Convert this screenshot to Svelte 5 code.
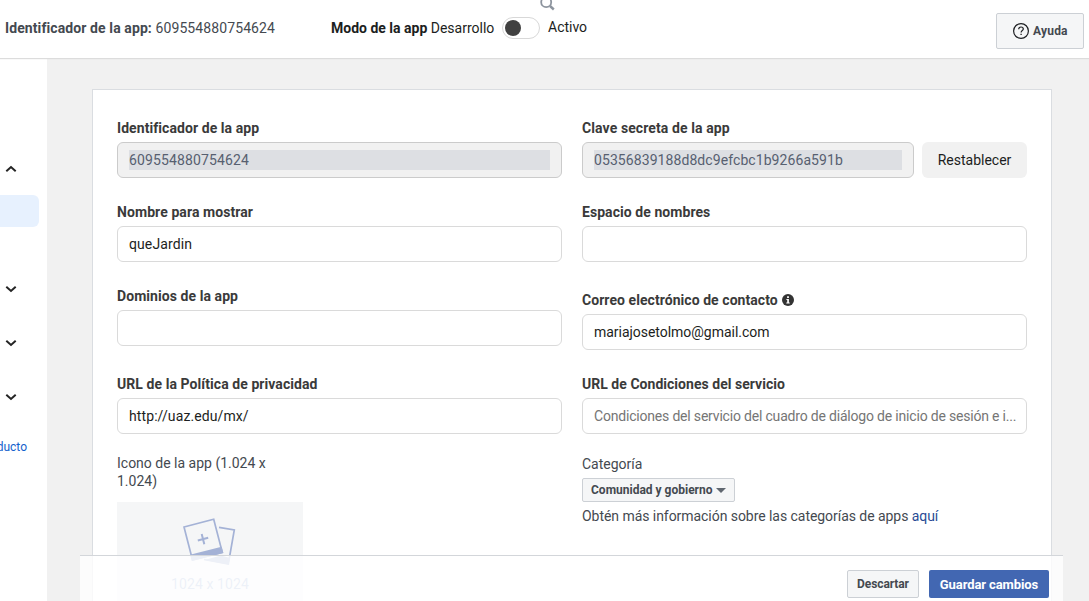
<script>
  const left = [
    { label: 'Identificador de la app', value: '609554880754624', locked: true, ls: 0.07, vs: 0.14 },
    { label: 'Nombre para mostrar', value: 'queJardin', ls: 0.08, vs: 0.1 },
    { label: 'Dominios de la app', value: '', ls: 0.07, vs: 0 },
    { label: 'URL de la Política de privacidad', value: 'http://uaz.edu/mx/', roomy: true, ls: 0.07, vs: 0.1 }
  ];
  const right = [
    { label: 'Clave secreta de la app', value: '05356839188d8dc9efcbc1b9266a591b', locked: true, reset: true, ls: 0.1, vs: 0.08 },
    { label: 'Espacio de nombres', value: '', ls: 0.06, vs: 0 },
    { label: 'Correo electrónico de contacto', value: 'mariajosetolmo@gmail.com', info: true, roomy: true, ls: 0.06, vs: -0.03 },
    { label: 'URL de Condiciones del servicio', value: '', placeholder: 'Condiciones del servicio del cuadro de diálogo de inicio de sesión e i...', ls: 0.03, vs: -0.19 }
  ];
</script>

{#snippet field(f)}
  <div class="field" class:roomy={f.roomy}>
    <div class="label">
      <span style="letter-spacing: {f.ls}px">{f.label}</span>
      {#if f.info}
        <svg width="12" height="12" viewBox="0 0 12 12"><circle cx="6" cy="6" r="6" fill="#333" /><path d="M4.4 5h2.5v3.5h.8v1H4.3v-1h.9V6h-.8zM5.1 2.3h1.8v1.6H5.1z" fill="#fff" /></svg>
      {/if}
    </div>
    <div class="line">
      <div class="input" class:locked={f.locked}>
        <span class="value" class:placeholder={f.placeholder} style="letter-spacing: {f.vs}px">{f.value || f.placeholder || ''}</span>
      </div>
      {#if f.reset}<button class="reset">Restablecer</button>{/if}
    </div>
  </div>
{/snippet}

<div class="page">
  <header>
    <svg class="search" width="16" height="16" viewBox="0 0 16 16" fill="none" stroke="#8d949e"><circle cx="6.2" cy="6.2" r="5" stroke-width="1.8" /><path d="M10 10l3.8 3.5" stroke-width="2.4" /></svg>
    <div class="appid"><b>Identificador de la app:</b> <span>609554880754624</span></div>
    <div class="mode"><b>Modo de la app</b> <span>Desarrollo</span></div>
    <div class="toggle"><i></i></div>
    <div class="active">Activo</div>
    <button class="help">
      <svg width="16" height="16" viewBox="0 0 16 16" fill="none" stroke="#1c1e21"><circle cx="8" cy="8" r="7.4" stroke-width="1.2" /><path d="M5.7 6.3C5.7 4.8 6.6 4 8 4s2.3.8 2.3 2c0 1.6-2.2 1.6-2.2 3.5" stroke-width="1.2" /><path d="M8.1 10.8v1.3" stroke-width="1.3" /></svg>
      <span>Ayuda</span>
    </button>
  </header>

  <div class="body">
    <nav>
      <div class="nav-item"><svg class="chev" width="12" height="8" viewBox="0 0 12 8"><path d="M1.3 6.2L6 2l4.7 4.2" /></svg></div>
      <div class="selected"></div>
      {#each [1, 2, 3] as n (n)}
        <div class="nav-item group"><svg class="chev" width="12" height="8" viewBox="0 0 12 8"><path d="M1.3 1.8L6 6l4.7-4.2" /></svg></div>
      {/each}
      <div class="product">ducto</div>
    </nav>

    <main>
      <section class="card">
        <div class="col">
          {#each left as f (f.label)}{@render field(f)}{/each}
          <div class="icon-label">Icono de la app (1.024 x<br />1.024)</div>
          <div class="upload">
            <svg width="54" height="50" viewBox="0 0 54 50" fill="none" stroke="#a4b2d6" stroke-width="1.7">
              <path d="M36 9.3L51.3 12 45.3 46 21 41.5" />
              <path d="M21.5 42L38 37.5 47 40 45.5 46.5z" fill="#a4b2d6" stroke="none" />
              <path d="M1 9L30.7 1.2 39.3 34.4 9.5 42z" fill="#f5f6f7" />
              <path d="M8.2 37.4L38 29.7 39.3 34.4 9.5 42z" fill="#a4b2d6" />
              <path d="M14.8 22.5l10.4-2.7M18.7 16l2.6 10.2" stroke-width="2" />
            </svg>
            <span>1024 x 1024</span>
          </div>
        </div>
        <div class="col">
          {#each right as f (f.label)}{@render field(f)}{/each}
          <div class="cat-label">Categoría</div>
          <button class="select"><span>Comunidad y gobierno</span><i></i></button>
          <div class="more">Obtén más información sobre las categorías de apps <a href="#top">aquí</a></div>
        </div>
      </section>
    </main>
  </div>

  <footer>
    <button class="discard">Descartar</button>
    <button class="save">Guardar cambios</button>
  </footer>
</div>

<style>
  :global(body) { margin: 0; }
  * { box-sizing: border-box; }
  .page {
    position: relative; width: 1089px; height: 601px; overflow: hidden;
    display: flex; flex-direction: column; background: #f1f1f1;
    font: 14px/20px Roboto, sans-serif; color: #1c1e21; white-space: nowrap;
  }
  button { font-family: inherit; margin: 0; padding: 0; white-space: nowrap; }
  svg { display: block; flex: none; }
  header {
    position: relative; z-index: 1; height: 58px; flex: none; display: flex; align-items: flex-start;
    padding: 0 5px; background: #fff; box-shadow: 0 1px 1px #dcdcdc;
  }
  .search { position: absolute; left: 540px; top: -4px; }
  .appid { width: 326px; padding-top: 18px; color: #444950; letter-spacing: 0.1px; }
  .mode { width: 171px; padding-top: 18px; }
  .toggle { width: 38px; height: 22px; margin-top: 17px; padding: 2px; border: 1px solid #d8d8d8; border-radius: 11px; }
  .toggle i { display: block; width: 16px; height: 16px; border-radius: 50%; background: #404040; }
  .active { margin: 17px 0 0 8px; }
  .help {
    display: flex; align-items: center; gap: 4px; width: 88px; height: 36px; margin: 13px 0 0 auto; padding-left: 16px;
    background: #f5f6f7; border: 1px solid #ccd0d5; border-radius: 2px; font-size: 12px; font-weight: 700; color: #444950; letter-spacing: 0.2px;
  }
  .body { display: flex; flex: 1; min-height: 0; }
  nav { width: 47px; background: #fff; overflow: hidden; padding-top: 107px; }
  .nav-item { height: 8px; padding-left: 5px; }
  .chev { fill: none; stroke: #242424; stroke-width: 2; }
  .selected { height: 32px; width: 39px; margin: 22px 0 58px; background: #e7f1fe; border-radius: 0 6px 6px 0; }
  .group { margin-bottom: 46px; }
  .product { width: 27px; display: flex; justify-content: flex-end; margin-top: -10px; font-size: 12px; color: #1461cc; }
  main { flex: 1; padding: 31px 0 0 45px; }
  .card { display: flex; gap: 20px; width: 960px; height: 560px; padding: 28px 24px 0; border: 1px solid #dadde1; background: #fff; }
  .col { width: 445px; flex: none; }
  .field { margin-bottom: 24px; }
  .field.roomy { margin-top: 28px; }
  .label { display: flex; align-items: center; gap: 4px; height: 20px; margin-bottom: 4px; font-weight: 700; color: #3a3a3a; }
  .line { display: flex; gap: 8px; }
  .input { flex: 1; min-width: 0; height: 36px; padding: 7px 11px; border: 1px solid #dadada; border-radius: 6px; background: #fff; }
  .value { display: block; height: 20px; }
  .placeholder { color: #757575; }
  .locked { background: #f1f1f1; border-color: #cbcbcb; }
  .locked .value { background: #dddfe3; color: #576070; }
  .reset { width: 105px; height: 36px; border: 0; border-radius: 6px; background: #f1f1f1; color: #1c1e21; font-size: 14px; }
  .icon-label { margin-top: -4px; line-height: 18px; color: #444950; }
  .upload { width: 186px; height: 150px; margin-top: 12px; padding-top: 16px; background: #f5f6f7; display: flex; flex-direction: column; align-items: center; color: #a4b8dc; }
  .upload span { margin-top: 6px; letter-spacing: 0.1px; }
  .cat-label { margin-top: -4px; color: #444950; }
  .select {
    display: flex; align-items: center; justify-content: space-between; width: 153px; height: 24px; margin: 4px 0; padding: 0 8px;
    background: #f5f6f7; border: 1px solid #ccd0d5; border-radius: 2px; font-size: 12px; font-weight: 700; color: #444950;
  }
  .select i { border: 5px solid transparent; border-top: 5px solid #606770; border-bottom: 0; }
  .more { color: #444950; letter-spacing: -0.05px; }
  .more a { color: #2a4b94; text-decoration: none; }
  footer {
    position: absolute; z-index: 2; left: 80px; top: 555px; width: 983px; height: 46px; display: flex; justify-content: flex-end;
    gap: 10px; padding: 14px 14px 0 0; background: rgba(255, 255, 255, 0.8); border-top: 1px solid #d3d6da;
  }
  .discard { width: 72px; height: 28px; background: #f5f6f7; border: 1px solid #ccd0d5; border-radius: 2px; font-size: 12px; font-weight: 700; color: #444950; letter-spacing: -0.1px; }
  .save { width: 120px; height: 28px; background: #4267b2; border: 0; border-radius: 2px; font-size: 13px; font-weight: 700; color: #fff; letter-spacing: -0.1px; }
</style>
